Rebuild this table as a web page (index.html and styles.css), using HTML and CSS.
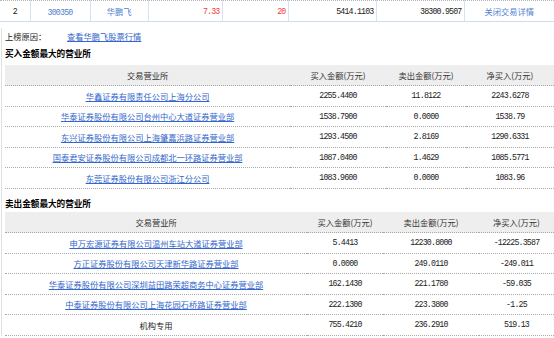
FILE: index.html
```html
<!DOCTYPE html>
<html lang="zh-CN">
  <head>
    <meta charset="UTF-8" />
    <title>华鹏飞 龙虎榜</title>
    <link rel="stylesheet" href="styles.css">
  </head>
  <body>
    <table class="stock-row">
      <colgroup>
        <col style="width: 30px" /><col style="width: 60px" /><col style="width: 58px" /><col style="width: 74px" />
        <col style="width: 66px" /><col style="width: 88px" /><col style="width: 88px" /><col style="width: 90px" />
      </colgroup>
      <tr>
        <td class="center num">2</td>
        <td class="center"><a class="soft-link num" href="#">300350</a></td>
        <td class="center"><a class="soft-link" href="#">华鹏飞</a></td>
        <td class="right num up">7.33</td>
        <td class="right num up">20</td>
        <td class="right num">5414.1103</td>
        <td class="right num">38300.9507</td>
        <td class="center"><a class="soft-link" href="#">关闭交易详情</a></td>
      </tr>
    </table>

    <div class="detail">
      <div class="reason">
        <span class="reason-label">上榜原因：</span>
        <a class="link" href="#">查看华鹏飞股票行情</a>
      </div>

      <div class="section-title">买入金额最大的营业所</div>
      <table class="deals">
        <colgroup>
          <col style="width: 285px" /><col style="width: 96px" /><col style="width: 80px" /><col style="width: 88px" />
        </colgroup>
        <tr class="head">
          <th>交易营业所</th><th>买入金额(万元)</th><th>卖出金额(万元)</th><th>净买入(万元)</th>
        </tr>
        <tr><td><a class="link" href="#">华鑫证券有限责任公司上海分公司</a></td><td class="num">2255.4400</td><td class="num">11.8122</td><td class="num">2243.6278</td></tr>
        <tr><td><a class="link" href="#">华泰证券股份有限公司台州中心大道证券营业部</a></td><td class="num">1538.7900</td><td class="num">0.0000</td><td class="num">1538.79</td></tr>
        <tr><td><a class="link" href="#">东兴证券股份有限公司上海肇嘉浜路证券营业部</a></td><td class="num">1293.4500</td><td class="num">2.8169</td><td class="num">1290.6331</td></tr>
        <tr><td><a class="link" href="#">国泰君安证券股份有限公司成都北一环路证券营业部</a></td><td class="num">1087.0400</td><td class="num">1.4629</td><td class="num">1085.5771</td></tr>
        <tr><td><a class="link" href="#">东莞证券股份有限公司浙江分公司</a></td><td class="num">1083.9600</td><td class="num">0.0000</td><td class="num">1083.96</td></tr>
      </table>

      <div class="section-title sell">卖出金额最大的营业所</div>
      <table class="deals">
        <colgroup>
          <col style="width: 302px" /><col style="width: 76px" /><col style="width: 96px" /><col style="width: 75px" />
        </colgroup>
        <tr class="head">
          <th>交易营业所</th><th>买入金额(万元)</th><th>卖出金额(万元)</th><th>净买入(万元)</th>
        </tr>
        <tr><td><a class="link" href="#">申万宏源证券有限公司温州车站大道证券营业部</a></td><td class="num">5.4413</td><td class="num">12230.8000</td><td class="num">-12225.3587</td></tr>
        <tr><td><a class="link" href="#">方正证券股份有限公司天津新华路证券营业部</a></td><td class="num">0.0000</td><td class="num">249.0110</td><td class="num">-249.011</td></tr>
        <tr><td><a class="link" href="#">华泰证券股份有限公司深圳益田路荣超商务中心证券营业部</a></td><td class="num">162.1430</td><td class="num">221.1780</td><td class="num">-59.035</td></tr>
        <tr><td><a class="link" href="#">中泰证券股份有限公司上海花园石桥路证券营业部</a></td><td class="num">222.1300</td><td class="num">223.3800</td><td class="num">-1.25</td></tr>
        <tr><td>机构专用</td><td class="num">755.4210</td><td class="num">236.2910</td><td class="num">519.13</td></tr>
      </table>
    </div>
  </body>
</html>
```

FILE: styles.css
```css
* {
  margin: 0;
  padding: 0;
  box-sizing: border-box;
}

body {
  font-family: "Noto Sans CJK SC", sans-serif;
  font-size: 8.25px;
  color: #222;
  background: #fff;
  width: 554px;
  overflow: hidden;
}

a {
  text-decoration: none;
}

.num {
  font-family: "Liberation Mono", monospace;
  letter-spacing: -0.8px;
}

/* top quote row */
.stock-row {
  width: 554px;
  table-layout: fixed;
  border-collapse: collapse;
  border-top: 1px dotted #b5b5b5;
}

.stock-row td {
  height: 21px;
  padding: 0 2px;
  border-left: 1px solid #d6e3f0;
  border-bottom: 1px solid #cddcec;
  white-space: nowrap;
}

.stock-row td:first-child {
  border-left: none;
}

.center {
  text-align: center;
}

.right {
  text-align: right;
}

.up {
  color: #f23c3c;
}

.soft-link {
  color: #4f82d0;
}

.link {
  color: #3366cc;
  text-decoration: underline;
}

/* detail block */
.detail {
  margin-left: 1px;
  padding-left: 3px;
  border-left: 1px solid #e0e0e0;
}

.reason {
  display: flex;
  height: 16px;
  margin-top: 6px;
  align-items: center;
}

.reason-label {
  width: 62px;
}

.section-title {
  height: 16px;
  line-height: 16px;
  margin: 1px 0 4px;
  font-weight: 700;
  color: #000;
  font-size: 8.6px;
}

.section-title.sell {
  margin: 6px 0 1.5px;
}

.deals {
  width: 549px;
  table-layout: fixed;
  border-collapse: collapse;
}

.deals th,
.deals td {
  height: 20.5px;
  text-align: center;
  white-space: nowrap;
  border-bottom: 1px dotted #a8a8a8;
  padding: 0;
}

.deals th {
  font-weight: 400;
  color: #333;
}

.deals .head {
  background: #eeeeee;
}
```
